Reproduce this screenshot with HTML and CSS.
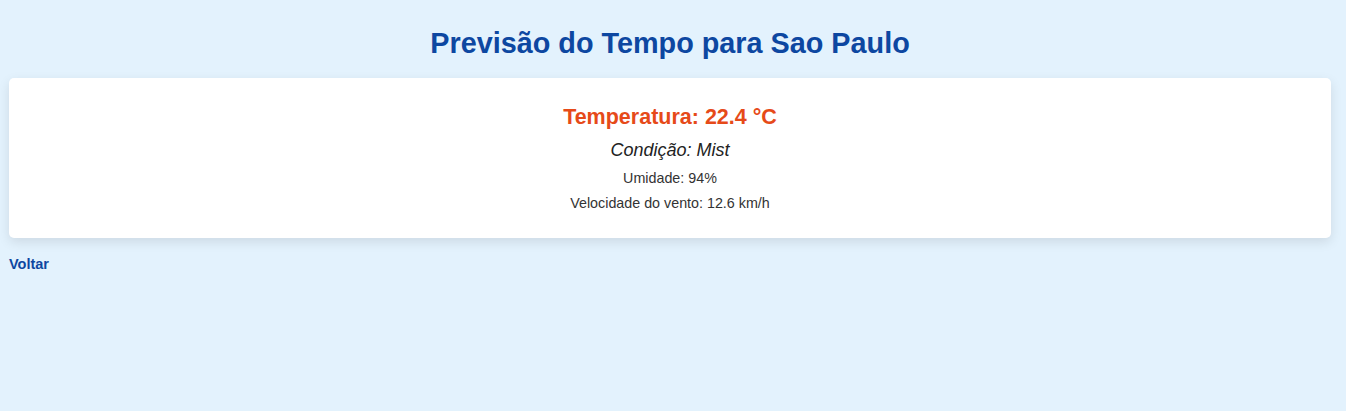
FILE: index.html
```html
<!DOCTYPE html>
<html lang="pt">
<head>
<meta charset="utf-8">
<title>Previsão do Tempo</title>
<link rel="stylesheet" href="styles.css">
</head>
<body>
<main class="page">
  <h1 class="title">Previsão do Tempo para Sao Paulo</h1>
  <section class="card">
    <h2 class="temp">Temperatura: 22.4 °C</h2>
    <p class="cond">Condição: Mist</p>
    <p class="info">Umidade: 94%</p>
    <p class="info">Velocidade do vento: 12.6 km/h</p>
  </section>
  <a class="back" href="#">Voltar</a>
</main>
</body>
</html>
```
FILE: styles.css
```css
html, body {
  margin: 0;
  padding: 0;
  background: #e3f2fd;
  height: 100%;
}
body {
  font-family: "Liberation Sans", Arial, sans-serif;
  color: #333;
}
.page {
  padding: 0 15px 0 9px;
  display: flex;
  flex-direction: column;
  align-items: stretch;
}
.title {
  margin: 27px 0 19px;
  font-size: 28.8px;
  line-height: 32px;
  font-weight: bold;
  color: #0d47a1;
  text-align: center;
}
.card {
  background: #fff;
  border-radius: 5px;
  box-shadow: 0 4px 12px rgba(0, 0, 0, 0.1);
  padding: 27px 20px;
  text-align: center;
}
.temp {
  margin: 0;
  font-size: 21.5px;
  line-height: 24px;
  font-weight: bold;
  color: #e64a19;
}
.cond {
  margin: 11px 0 0;
  font-size: 18px;
  line-height: 20px;
  font-style: italic;
  color: #222;
}
.info {
  margin: 10px 0 0;
  font-size: 14.3px;
  line-height: 16px;
  color: #333;
}
.info + .info {
  margin-top: 9px;
}
.back {
  margin-top: 18px;
  align-self: flex-start;
  font-size: 14.5px;
  line-height: 16px;
  font-weight: bold;
  color: #0d47a1;
  text-decoration: none;
}
```
